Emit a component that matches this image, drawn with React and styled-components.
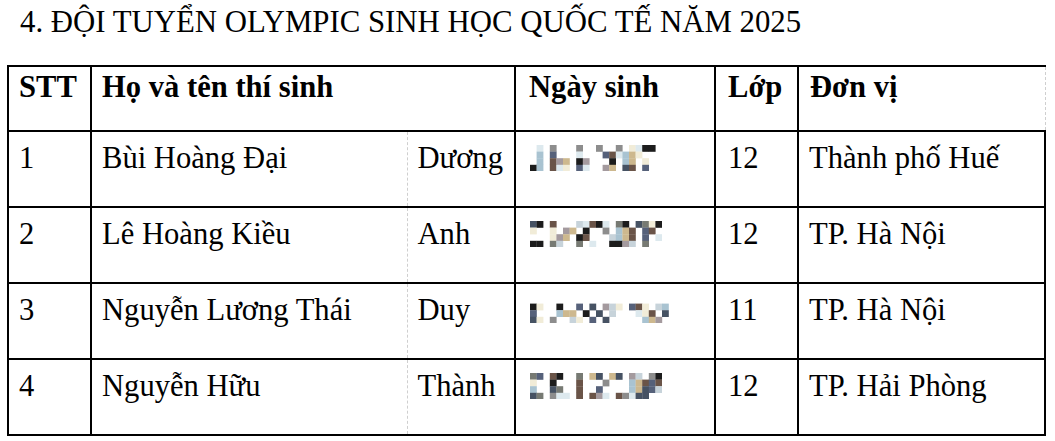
import styled, { createGlobalStyle } from "styled-components";

const GlobalStyle = createGlobalStyle`
  html, body {
    margin: 0;
    padding: 0;
    background: #ffffff;
  }
  body {
    font-family: "Liberation Serif", "Times New Roman", serif;
    color: #000;
  }
`;

const palette = {
  c: "#dde9ee",
  b: "#a9c3d1",
  g: "#8d8d8d",
  n: "#56617a",
  k: "#1c1c1c",
  t: "#cdb88e",
  r: "#6a5448",
  y: "#f1ecd8",
  m: "#a49a9e",
  d: "#465263",
  e: "#c7d3da",
  o: "#777a73",
};

const students = [
  {
    id: "1",
    name: "Bùi Hoàng Đại",
    given: "Dương",
    grade: "12",
    unit: "Thành phố Huế",
    dob: [
      ".c.g...g..g..g.yckk.",
      ".b.n...c...nrcbty...",
      ".b.rmt.km...k.bt.y..",
      "kb.rcy.nc..mt.dr.n..",
    ],
  },
  {
    id: "2",
    name: "Lê Hoàng Kiều",
    given: "Anh",
    grade: "12",
    unit: "TP. Hà Nội",
    dob: [
      "dk.r...ecrkc.ok.doyk",
      "y..y.mt.k..g.btr.nr.",
      "...ymt.kr...ebtr.n.c",
      "kk.oe..o.c..kkme.o..",
    ],
  },
  {
    id: "3",
    name: "Nguyễn Lương Thái",
    given: "Duy",
    grade: "11",
    unit: "TP. Hà Nội",
    dob: [
      ".....................",
      "ky..k..n.d.mey.nry.eb",
      "n...btt.k.d.e...cyr.d",
      "dy.g..ey.n.d.....btm.",
    ],
  },
  {
    id: "4",
    name: "Nguyễn Hữu",
    given: "Thành",
    grade: "12",
    unit: "TP. Hải Phòng",
    dob: [
      "on.rk..o.td.td.me.gk",
      "y..k...r...g...btrnr",
      "b..do..r..n....btdne",
      "do.gcc.r.rmc.rgcdd..",
    ],
  },
];

const CELL = 6.6;

const Mosaic = ({ rows }) => {
  const cols = Math.max(...rows.map((r) => r.length));
  return (
    <svg width={cols * CELL} height={rows.length * CELL} style={{ display: "block" }}>
      {rows.map((row, y) =>
        row.split("").map((ch, x) =>
          palette[ch] ? (
            <rect
              key={`${x}-${y}`}
              x={x * CELL}
              y={y * CELL}
              width={CELL + 0.2}
              height={CELL + 0.2}
              fill={palette[ch]}
            />
          ) : null
        )
      )}
    </svg>
  );
};

const App = () => {
  return (
    <Page>
      <GlobalStyle />
      <Title>4. ĐỘI TUYỂN OLYMPIC SINH HỌC QUỐC TẾ NĂM 2025</Title>
      <Table>
        <colgroup>
          <col style={{ width: 83 }} />
          <col style={{ width: 316 }} />
          <col style={{ width: 108 }} />
          <col style={{ width: 200 }} />
          <col style={{ width: 83 }} />
          <col style={{ width: 247 }} />
        </colgroup>
        <thead>
          <tr>
            <HeadCell>STT</HeadCell>
            <HeadCell colSpan={2}>Họ và tên thí sinh</HeadCell>
            <HeadCell $pad={13}>Ngày sinh</HeadCell>
            <HeadCell $pad={12}>Lớp</HeadCell>
            <HeadCell $pad={11} $last>Đơn vị</HeadCell>
          </tr>
        </thead>
        <tbody>
          {students.map((s) => (
            <tr key={s.id}>
              <Cell>{s.id}</Cell>
              <Cell $split="right">{s.name}</Cell>
              <Cell $split="left">{s.given}</Cell>
              <DateCell>
                <Mosaic rows={s.dob} />
              </DateCell>
              <Cell $pad={12}>{s.grade}</Cell>
              <Cell $pad={10}>{s.unit}</Cell>
            </tr>
          ))}
        </tbody>
      </Table>
    </Page>
  );
};

const Page = styled.div`
  width: 1055px;
  height: 441px;
  overflow: hidden;
  padding: 6px 0 0 7px;
  box-sizing: border-box;
`;

const Title = styled.div`
  font-size: 30.8px;
  line-height: 33px;
  padding-left: 13px;
  margin-bottom: 26px;
`;

const Table = styled.table`
  border-collapse: collapse;
  table-layout: fixed;
  width: 1037px;
  font-size: 30.6px;

  thead tr {
    height: 65px;
  }
  tbody tr {
    height: 76px;
  }
`;

const HeadCell = styled.th`
  text-align: left;
  vertical-align: top;
  font-weight: bold;
  line-height: 33px;
  padding: 4px 6px 0 ${(p) => p.$pad ?? 10}px;
  border: 2px solid #000;
  border-right: ${(p) => (p.$last ? "1px dashed #cfcfcf" : "2px solid #000")};
`;

const Cell = styled.td`
  vertical-align: top;
  line-height: 33px;
  padding: 10px 6px 0 ${(p) => p.$pad ?? 10}px;
  border: 2px solid #000;
  white-space: nowrap;
  ${(p) => p.$split === "right" && "border-right: 1px dashed #cfcfcf;"}
  ${(p) => p.$split === "left" && "border-left: 1px dashed #cfcfcf; padding-left: 10px;"}
`;

const DateCell = styled.td`
  vertical-align: top;
  padding: 13px 8px 0 14px;
  border: 2px solid #000;
`;

export default App;
